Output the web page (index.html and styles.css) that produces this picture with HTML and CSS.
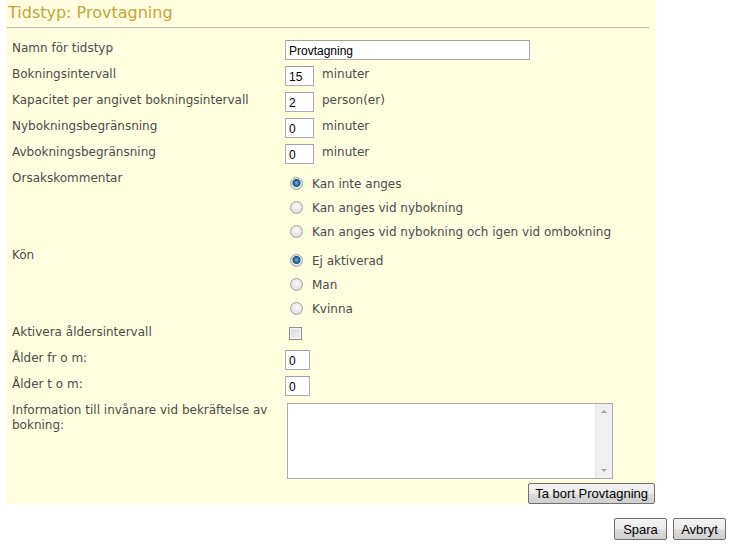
FILE: index.html
```html
<!DOCTYPE html>
<html lang="sv">
<head>
    <meta charset="utf-8">
    <title>Tidstyp: Provtagning</title>
    <link rel="stylesheet" href="styles.css">
</head>
<body>
<div class="panel">
    <h1 class="title">Tidstyp: Provtagning</h1>

    <div class="form">
        <div class="row">
            <label class="label">Namn för tidstyp</label>
            <div class="field"><input type="text" class="text wide" value="Provtagning"></div>
        </div>
        <div class="row">
            <label class="label">Bokningsintervall</label>
            <div class="field"><input type="text" class="text small" value="15"><span class="unit">minuter</span></div>
        </div>
        <div class="row">
            <label class="label">Kapacitet per angivet bokningsintervall</label>
            <div class="field"><input type="text" class="text small" value="2"><span class="unit">person(er)</span></div>
        </div>
        <div class="row">
            <label class="label">Nybokningsbegränsning</label>
            <div class="field"><input type="text" class="text small" value="0"><span class="unit">minuter</span></div>
        </div>
        <div class="row">
            <label class="label">Avbokningsbegränsning</label>
            <div class="field"><input type="text" class="text small" value="0"><span class="unit">minuter</span></div>
        </div>
        <div class="row radio-row">
            <label class="label">Orsakskommentar</label>
            <div class="radio-list">
                <label class="option"><input type="radio" name="orsak" checked>Kan inte anges</label>
                <label class="option"><input type="radio" name="orsak">Kan anges vid nybokning</label>
                <label class="option"><input type="radio" name="orsak">Kan anges vid nybokning och igen vid ombokning</label>
            </div>
        </div>
        <div class="row radio-row">
            <label class="label">Kön</label>
            <div class="radio-list">
                <label class="option"><input type="radio" name="kon" checked>Ej aktiverad</label>
                <label class="option"><input type="radio" name="kon">Man</label>
                <label class="option"><input type="radio" name="kon">Kvinna</label>
            </div>
        </div>
        <div class="row">
            <label class="label">Aktivera åldersintervall</label>
            <div class="field"><input type="checkbox" class="check"></div>
        </div>
        <div class="row">
            <label class="label">Ålder fr o m:</label>
            <div class="field"><input type="text" class="text age" value="0"></div>
        </div>
        <div class="row">
            <label class="label">Ålder t o m:</label>
            <div class="field"><input type="text" class="text age" value="0"></div>
        </div>
        <div class="row info-row">
            <label class="label">Information till invånare vid bekräftelse av bokning:</label>
            <div class="field">
                <div class="info-box">
                    <textarea class="info"></textarea>
                    <div class="scrollbar"><span class="arrow up"></span><span class="arrow down"></span></div>
                </div>
            </div>
        </div>
    </div>

    <div class="panel-actions">
        <button class="btn">Ta bort Provtagning</button>
    </div>
</div>

<div class="actions">
    <button class="btn">Spara</button>
    <button class="btn">Avbryt</button>
</div>
</body>
</html>
```

FILE: styles.css
```css
body {
    margin: 0;
    font-family: "DejaVu Sans", Verdana, sans-serif;
    font-size: 12px;
    color: #4b4b4b;
    background: #fff;
}

.panel {
    margin-left: 6px;
    width: 650px;
    background: #ffffe0;
}

.title {
    margin: 0 7px 0 1px;
    padding: 3px 0 4px 1px;
    font-size: 16px;
    font-weight: normal;
    line-height: 20px;
    color: #c9a23a;
    border-bottom: 1px solid #b9b9a9;
}

.form {
    padding: 12px 0 0 6px;
}

.row {
    display: grid;
    grid-template-columns: 273px 1fr;
    margin-bottom: 6px;
    min-height: 20px;
}

.label {
    padding: 1px 4px 0 0;
    line-height: 15px;
}

.field {
    display: flex;
    align-items: flex-start;
}

.unit {
    margin-left: 8px;
    padding-top: 1px;
    line-height: 15px;
}

.text {
    box-sizing: border-box;
    height: 20px;
    margin: 0;
    padding: 1px 3px 0;
    font-family: "Liberation Sans", Arial, sans-serif;
    font-size: 12px;
    color: #000;
    background: #fff;
    border: 1px solid #abadb3;
    border-top-color: #a0a0a0;
    outline: none;
}

.wide {
    width: 245px;
}

.small {
    width: 29px;
}

.age {
    width: 25px;
}

.radio-row {
    margin-bottom: 4px;
}

.radio-list {
    padding-top: 1px;
}

.option {
    display: flex;
    align-items: center;
    height: 24px;
    padding-top: 1px;
    box-sizing: border-box;
}

.option input {
    appearance: none;
    -webkit-appearance: none;
    width: 13px;
    height: 13px;
    margin: -1px 9px 0 5px;
    border: 1px solid #a3a3a3;
    border-radius: 50%;
    background: radial-gradient(circle at 50% 40%, #fbfbfb 0%, #e4e4e4 60%, #cfcfcf 100%);
}

.option input:checked {
    background: radial-gradient(circle at 50% 45%, #7fb2d8 0px, #2c6e9e 2.5px, #1d4d73 3.5px, #e6e6e6 4.5px, #d2d2d2 100%);
}

.check {
    appearance: none;
    -webkit-appearance: none;
    width: 13px;
    height: 13px;
    margin: 3px 0 0 4px;
    border: 1px solid #8e8f8f;
    background: linear-gradient(135deg, #d9d9d9 0%, #f2f2f2 100%);
    box-shadow: inset 0 0 0 1px #f4f4f4;
}

.info-row {
    margin-bottom: 4px;
}

.info-box {
    position: relative;
    width: 326px;
    height: 76px;
    margin: 1px 0 0 2px;
}

.info {
    box-sizing: border-box;
    width: 100%;
    height: 100%;
    margin: 0;
    padding: 2px 18px 2px 3px;
    border: 1px solid #abadb3;
    background: #fff;
    resize: none;
    overflow: hidden;
    outline: none;
}

.scrollbar {
    position: absolute;
    top: 1px;
    right: 1px;
    bottom: 1px;
    width: 16px;
    background: #f0f0f0;
    border-left: 1px solid #e6e6e6;
}

.arrow {
    position: absolute;
    left: 5px;
    width: 0;
    height: 0;
    border-left: 3px solid transparent;
    border-right: 3px solid transparent;
}

.arrow.up {
    top: 6px;
    border-bottom: 3px solid #a6a6a6;
}

.arrow.down {
    bottom: 6px;
    border-top: 3px solid #a6a6a6;
}

.panel-actions {
    display: flex;
    justify-content: flex-end;
    padding: 0 1px 0 0;
}

.actions {
    display: flex;
    justify-content: flex-end;
    gap: 6px;
    padding: 14px 7px 0 0;
}

.btn {
    height: 21px;
    padding: 0 6px;
    font-family: "Liberation Sans", Arial, sans-serif;
    font-size: 13px;
    color: #000;
    border: 1px solid #707070;
    border-radius: 2px;
    background: linear-gradient(#f2f2f2 0%, #ebebeb 50%, #dddddd 51%, #cfcfcf 100%);
}

.actions .btn {
    width: 53px;
    height: 22px;
    padding: 0;
}
```
